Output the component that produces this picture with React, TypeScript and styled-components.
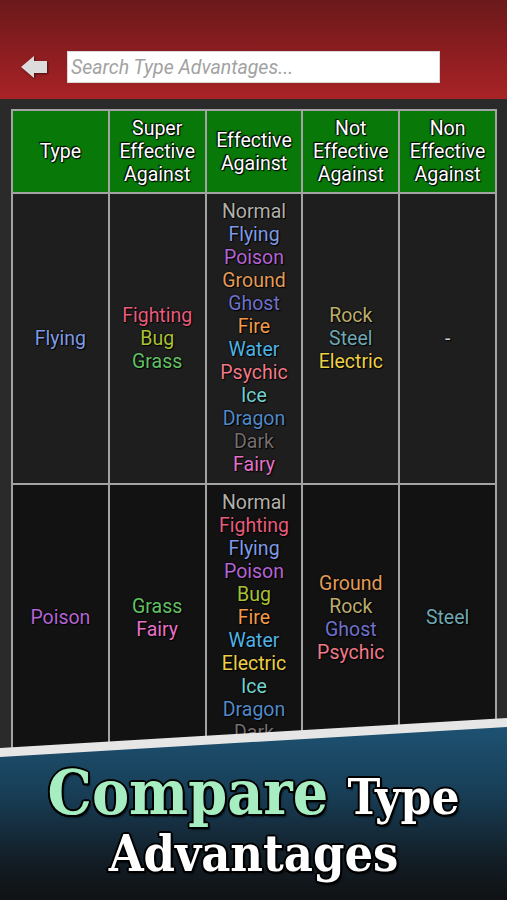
import React from 'react';
import styled, {createGlobalStyle} from 'styled-components';

const GlobalStyle = createGlobalStyle`
  html, body {
    margin: 0;
    padding: 0;
    background: #2a2a2a;
  }
  * {
    box-sizing: border-box;
  }
`;

const TYPE_COLORS: Record<string, string> = {
  Normal: '#b2b0aa',
  Fighting: '#e85c7c',
  Flying: '#7f9ae6',
  Poison: '#b464d4',
  Ground: '#e29c58',
  Rock: '#bcae6c',
  Bug: '#a8c234',
  Ghost: '#6f72cc',
  Steel: '#6ea8b2',
  Fire: '#f29a4a',
  Water: '#4fb2e4',
  Grass: '#62c064',
  Electric: '#eed046',
  Psychic: '#f07a88',
  Ice: '#72d2d0',
  Dragon: '#5189c8',
  Dark: '#746d70',
  Fairy: '#e672c8',
  '-': '#d0d0d0',
};

type Row = {
  type: string;
  superEffective: string[];
  effective: string[];
  notEffective: string[];
  nonEffective: string[];
};

const ROWS: Row[] = [
  {
    type: 'Flying',
    superEffective: ['Fighting', 'Bug', 'Grass'],
    effective: ['Normal', 'Flying', 'Poison', 'Ground', 'Ghost', 'Fire', 'Water', 'Psychic', 'Ice', 'Dragon', 'Dark', 'Fairy'],
    notEffective: ['Rock', 'Steel', 'Electric'],
    nonEffective: ['-'],
  },
  {
    type: 'Poison',
    superEffective: ['Grass', 'Fairy'],
    effective: ['Normal', 'Fighting', 'Flying', 'Poison', 'Bug', 'Fire', 'Water', 'Electric', 'Ice', 'Dragon', 'Dark'],
    notEffective: ['Ground', 'Rock', 'Ghost', 'Psychic'],
    nonEffective: ['Steel'],
  },
];

const HEADERS = ['Type', 'Super\nEffective\nAgainst', 'Effective\nAgainst', 'Not\nEffective\nAgainst', 'Non\nEffective\nAgainst'];

const Screen = styled.div`
  position: relative;
  width: 507px;
  height: 900px;
  overflow: hidden;
  background: #2a2a2a;
  font-family: Roboto, 'Liberation Sans', sans-serif;
`;

const Header = styled.div`
  height: 99px;
  display: flex;
  align-items: center;
  gap: 20px;
  padding: 35px 0 0 21px;
  background: linear-gradient(to bottom, #6b191b 0%, #8a1d20 50%, #a82326 100%);
`;

const BackButton = styled.div`
  width: 26px;
  height: 22px;
  display: flex;
  filter: drop-shadow(1px 1px 1px rgba(0, 0, 0, 0.55));
`;

const SearchBox = styled.div`
  width: 373px;
  height: 32px;
  background: #ffffff;
  border: 1px solid #d8d8d8;
  display: flex;
  align-items: center;
  padding-left: 3px;
  font-size: 19.5px;
  font-style: italic;
  color: #a2a2a2;
`;

const TableWrap = styled.div`
  padding: 10px 10px 0 11px;
`;

const Grid = styled.div`
  display: grid;
  grid-template-columns: repeat(5, 1fr);
  gap: 2px;
  padding: 2px;
  width: 486px;
  background: #a3a3a3;
`;

const HeadCell = styled.div`
  height: 81px;
  background: #087808;
  display: flex;
  align-items: center;
  justify-content: center;
  text-align: center;
  white-space: pre-line;
  color: #ffffff;
  font-size: 19.5px;
  line-height: 23px;
  text-shadow: 0 0 2px #000, 1px 1px 1px #000, -1px -1px 1px #000;
`;

const Cell = styled.div<{$shade: string}>`
  background: ${({$shade}) => $shade};
  display: flex;
  flex-direction: column;
  align-items: center;
  justify-content: center;
  padding: 6px 0 7px;
  font-size: 19.5px;
  line-height: 23px;
`;

const Item = styled.div<{$color: string}>`
  color: ${({$color}) => $color};
  text-shadow: 0 0 2px #000, 1px 1px 1px #000;
`;

const Banner = styled.div`
  position: absolute;
  left: 0;
  right: 0;
  bottom: 0;
  height: 182px;
  background: #e6e6e6;
  clip-path: polygon(0 30px, 100% 0, 100% 100%, 0 100%);
`;

const BannerInner = styled.div`
  position: absolute;
  inset: 0;
  background: linear-gradient(to bottom, #1e5475 0%, #183f58 40%, #121c24 80%, #101214 100%);
  clip-path: polygon(0 39px, 100% 9px, 100% 100%, 0 100%);
  display: flex;
  flex-direction: column;
  align-items: center;
  padding-top: 44px;
  font-family: 'DejaVu Serif Condensed', 'DejaVu Serif', 'Liberation Serif', serif;
  font-stretch: condensed;
  font-weight: bold;
`;

const TitleLine = styled.div<{$size: number}>`
  font-size: ${({$size}) => $size}px;
  line-height: ${({$size}) => $size}px;
  white-space: nowrap;
`;

const Word = styled.span<{$color: string; $size: number}>`
  color: ${({$color}) => $color};
  font-size: ${({$size}) => $size}px;
  text-shadow: 2px 0 0 #000, -2px 0 0 #000, 0 2px 0 #000, 0 -2px 0 #000, 1.5px 1.5px 0 #000,
    -1.5px -1.5px 0 #000, 1.5px -1.5px 0 #000, -1.5px 1.5px 0 #000, 2px 3px 2px rgba(0, 0, 0, 0.6);
`;

const List = ({names}: {names: string[]}) => (
  <>
    {names.map((n, i) => (
      <Item key={i} $color={TYPE_COLORS[n] ?? '#ccc'}>
        {n}
      </Item>
    ))}
  </>
);

export default function App() {
  return (
    <>
      <GlobalStyle />
      <Screen>
        <Header>
          <BackButton>
            <svg width="26" height="22" viewBox="0 0 26 22">
              <polygon points="0,11 13,0 13,5 26,5 26,17 13,17 13,22" fill="#dcdcdc" />
            </svg>
          </BackButton>
          <SearchBox>Search Type Advantages...</SearchBox>
        </Header>
        <TableWrap>
          <Grid>
            {HEADERS.map(h => (
              <HeadCell key={h}>{h}</HeadCell>
            ))}
            {ROWS.map((r, idx) => {
              const shade = idx % 2 === 0 ? '#1e1e1e' : '#121212';
              return (
                <React.Fragment key={r.type}>
                  <Cell $shade={shade}>
                    <List names={[r.type]} />
                  </Cell>
                  <Cell $shade={shade}>
                    <List names={r.superEffective} />
                  </Cell>
                  <Cell $shade={shade}>
                    <List names={r.effective} />
                  </Cell>
                  <Cell $shade={shade}>
                    <List names={r.notEffective} />
                  </Cell>
                  <Cell $shade={shade}>
                    <List names={r.nonEffective} />
                  </Cell>
                </React.Fragment>
              );
            })}
          </Grid>
        </TableWrap>
        <Banner>
          <BannerInner>
            <TitleLine $size={62}>
              <Word $color="#a6eec2" $size={62}>
                Compare
              </Word>{' '}
              <Word $color="#ffffff" $size={49}>
                Type
              </Word>
            </TitleLine>
            <TitleLine $size={51}>
              <Word $color="#ffffff" $size={50}>
                Advantages
              </Word>
            </TitleLine>
          </BannerInner>
        </Banner>
      </Screen>
    </>
  );
}
